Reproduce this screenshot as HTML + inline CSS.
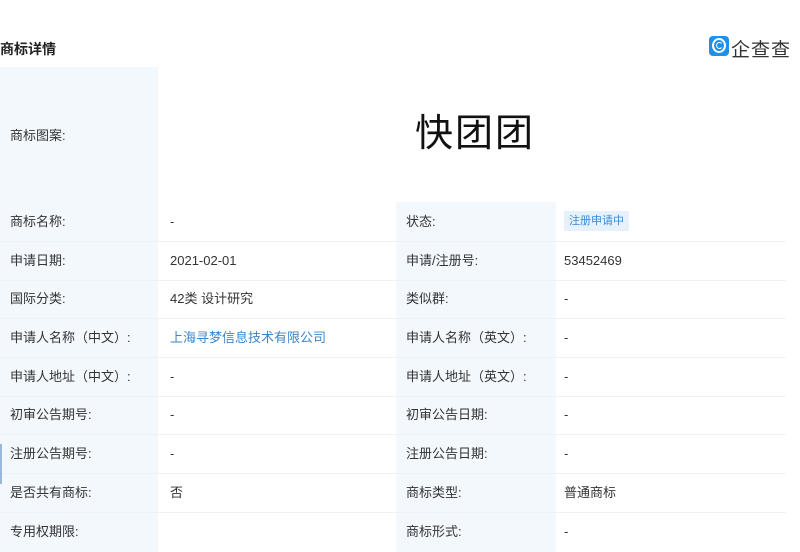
<!DOCTYPE html>
<html><head><meta charset="utf-8"><style>
*{margin:0;padding:0;box-sizing:border-box}
body{width:800px;height:552px;overflow:hidden;background:#fff;font-family:"Liberation Sans","Noto Sans CJK SC",sans-serif;color:#333;position:relative}
.a{position:absolute;white-space:nowrap}
.lb{position:absolute;background:#f3f8fd}
.t{font-size:13px;line-height:16px}
.hl{position:absolute;height:1px;background:#eef2f6}
</style></head><body>
<div class="a" style="left:0;top:39px;font-size:14px;font-weight:bold;color:#222">商标详情</div>
<div class="a" style="left:709px;top:36px;width:20px;height:20px;background:#1e90e8;border-radius:4px"></div>
<div class="a" style="left:712px;top:38px;width:14px;height:15px;border:2px solid #fff;border-radius:50%"></div>
<div class="a" style="left:716px;top:42px;width:7px;height:7px;border:1.5px solid #fff;border-right-color:transparent;border-radius:50%"></div>
<div class="a" style="left:731px;top:35px;font-size:19px;color:#333;letter-spacing:1px">企查查</div>

<div class="lb" style="left:0;top:67px;width:158px;height:485px"></div>
<div class="lb" style="left:396px;top:202px;width:160px;height:350px"></div>

<div class="a t" style="left:10px;top:128px">商标图案:</div>
<div class="a" style="left:415px;top:110px;font-size:38px;color:#111;letter-spacing:2px;line-height:48px">快团团</div>

<div class="hl" style="left:0;top:241px;width:786px"></div>
<div class="hl" style="left:0;top:280px;width:786px"></div>
<div class="hl" style="left:0;top:318px;width:786px"></div>
<div class="hl" style="left:0;top:357px;width:786px"></div>
<div class="hl" style="left:0;top:396px;width:786px"></div>
<div class="hl" style="left:0;top:434px;width:786px"></div>
<div class="hl" style="left:0;top:473px;width:786px"></div>
<div class="hl" style="left:0;top:512px;width:786px"></div>

<div class="a t" style="left:10px;top:214px">商标名称:</div>
<div class="a t" style="left:170px;top:214px">-</div>
<div class="a t" style="left:406px;top:214px">状态:</div>
<div class="a" style="left:564px;top:211px;background:#e6f1fb;color:#3a8ad6;font-size:11px;padding:3px 5px;line-height:14px">注册申请中</div>

<div class="a t" style="left:10px;top:253px">申请日期:</div>
<div class="a t" style="left:170px;top:253px">2021-02-01</div>
<div class="a t" style="left:406px;top:253px">申请/注册号:</div>
<div class="a t" style="left:564px;top:253px">53452469</div>

<div class="a t" style="left:10px;top:291px">国际分类:</div>
<div class="a t" style="left:170px;top:291px">42类 设计研究</div>
<div class="a t" style="left:406px;top:291px">类似群:</div>
<div class="a t" style="left:564px;top:291px">-</div>

<div class="a t" style="left:10px;top:330px">申请人名称（中文）:</div>
<div class="a t" style="left:170px;top:330px;color:#3a86cc">上海寻梦信息技术有限公司</div>
<div class="a t" style="left:406px;top:330px">申请人名称（英文）:</div>
<div class="a t" style="left:564px;top:330px">-</div>

<div class="a t" style="left:10px;top:369px">申请人地址（中文）:</div>
<div class="a t" style="left:170px;top:369px">-</div>
<div class="a t" style="left:406px;top:369px">申请人地址（英文）:</div>
<div class="a t" style="left:564px;top:369px">-</div>

<div class="a t" style="left:10px;top:407px">初审公告期号:</div>
<div class="a t" style="left:170px;top:407px">-</div>
<div class="a t" style="left:406px;top:407px">初审公告日期:</div>
<div class="a t" style="left:564px;top:407px">-</div>

<div class="a" style="left:0;top:444px;width:2px;height:40px;background:#9ab8d8"></div>
<div class="a t" style="left:10px;top:446px">注册公告期号:</div>
<div class="a t" style="left:170px;top:446px">-</div>
<div class="a t" style="left:406px;top:446px">注册公告日期:</div>
<div class="a t" style="left:564px;top:446px">-</div>

<div class="a t" style="left:10px;top:485px">是否共有商标:</div>
<div class="a t" style="left:170px;top:485px">否</div>
<div class="a t" style="left:406px;top:485px">商标类型:</div>
<div class="a t" style="left:564px;top:485px">普通商标</div>

<div class="a t" style="left:10px;top:524px">专用权期限:</div>
<div class="a t" style="left:406px;top:524px">商标形式:</div>
<div class="a t" style="left:564px;top:524px">-</div>
</body></html>
